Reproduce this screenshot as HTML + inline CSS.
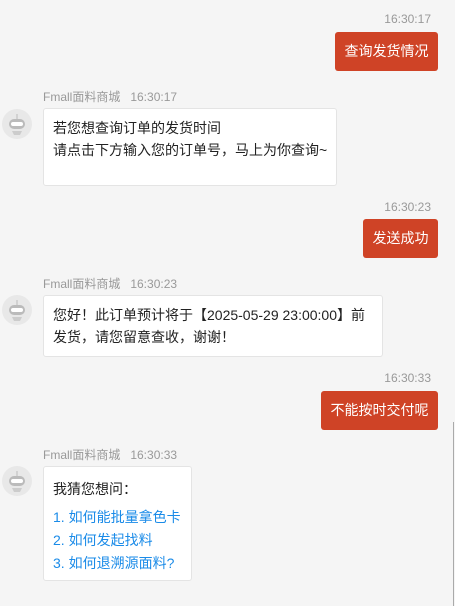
<!DOCTYPE html><html><head><meta charset="utf-8"><style>
body{margin:0;width:455px;height:606px;background:#f5f5f5;font-family:"Liberation Sans","Noto Sans CJK SC",sans-serif;position:relative;overflow:hidden}
.a{position:absolute}
.t{font-size:12px;color:#999;}
.r{background:#cf4326;color:#fff;font-size:14px;border-radius:3px;text-align:center;line-height:39px}
.b{background:#fff;border:1px solid #e4e4e4;border-radius:3px;font-size:14px;color:#222;box-sizing:border-box;padding:9px 9px;line-height:21.5px;white-space:nowrap;overflow:visible}
.av{width:30px;height:30px;border-radius:50%;background:#e8e8e8}
.lk{color:#1a8be8}
</style></head><body>
<div class="a t" style="right:24px;top:12px">16:30:17</div>
<div class="a r" style="left:335px;top:32px;width:103px;height:39px">查询发货情况</div>
<div class="a t" style="left:43px;top:88px">Fmall面料商城&nbsp;&nbsp;&nbsp;16:30:17</div>
<div class="a av" style="left:2px;top:109px"><svg width="30" height="30"><line x1="15" y1="5" x2="15" y2="10" stroke="#bbb"/><rect x="7" y="10" width="16" height="10" rx="5" fill="#bbb"/><rect x="9" y="13" width="12" height="4" rx="2" fill="#fff"/><path d="M10 22h10l-2 4h-6z" fill="#ccc"/></svg></div>
<div class="a b" style="left:43px;top:108px;width:294px;height:78px">若您想查询订单的发货时间<br>请点击下方输入您的订单号，马上为你查询~</div>
<div class="a t" style="right:24px;top:200px">16:30:23</div>
<div class="a r" style="left:363px;top:219px;width:75px;height:39px">发送成功</div>
<div class="a t" style="left:43px;top:275px">Fmall面料商城&nbsp;&nbsp;&nbsp;16:30:23</div>
<div class="a av" style="left:2px;top:295px"><svg width="30" height="30"><line x1="15" y1="5" x2="15" y2="10" stroke="#bbb"/><rect x="7" y="10" width="16" height="10" rx="5" fill="#bbb"/><rect x="9" y="13" width="12" height="4" rx="2" fill="#fff"/><path d="M10 22h10l-2 4h-6z" fill="#ccc"/></svg></div>
<div class="a b" style="left:43px;top:295px;width:340px;height:62px">您好！此订单预计将于【2025-05-29 23:00:00】前<br>发货，请您留意查收，谢谢！</div>
<div class="a t" style="right:24px;top:371px">16:30:33</div>
<div class="a r" style="left:321px;top:391px;width:117px;height:39px">不能按时交付呢</div>
<div class="a t" style="left:43px;top:446px">Fmall面料商城&nbsp;&nbsp;&nbsp;16:30:33</div>
<div class="a av" style="left:2px;top:466px"><svg width="30" height="30"><line x1="15" y1="5" x2="15" y2="10" stroke="#bbb"/><rect x="7" y="10" width="16" height="10" rx="5" fill="#bbb"/><rect x="9" y="13" width="12" height="4" rx="2" fill="#fff"/><path d="M10 22h10l-2 4h-6z" fill="#ccc"/></svg></div>
<div class="a b" style="left:43px;top:466px;width:149px;height:115px;padding-top:11px;line-height:23px">我猜您想问：<div style="height:5px"></div><span class="lk">1. 如何能批量拿色卡</span><br><span class="lk">2. 如何发起找料</span><br><span class="lk">3. 如何退溯源面料?</span></div>
<div class="a" style="left:453px;top:422px;width:1px;height:184px;background:#aaa"></div>
</body></html>
